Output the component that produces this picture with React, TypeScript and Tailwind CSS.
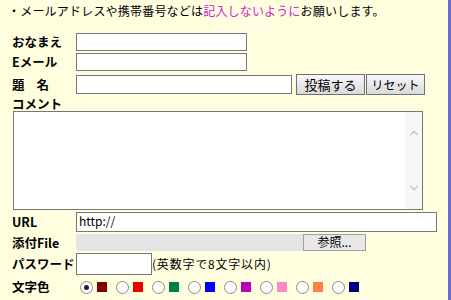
import { ChevronUp, ChevronDown } from "lucide-react"

const swatches = [
  "bg-[#800000]",
  "bg-[#ee0000]",
  "bg-[#008040]",
  "bg-[#0000ff]",
  "bg-[#bb00bb]",
  "bg-[#ff88c0]",
  "bg-[#ff8040]",
  "bg-[#000080]",
]

function Label({ children }: { children: React.ReactNode }) {
  return <div className="w-[64px] shrink-0 text-[12.5px] font-bold leading-[16px]">{children}</div>
}

function Field({ className = "", children }: { className?: string; children?: React.ReactNode }) {
  return (
    <div className={`border border-[#777] bg-white px-[2px] text-[12px] leading-[16px] ${className}`}>
      {children}
    </div>
  )
}

function Radio({ checked }: { checked?: boolean }) {
  return (
    <span className="flex h-[13px] w-[13px] items-center justify-center rounded-full border border-[#8a8a8a] bg-white">
      {checked && <span className="h-[5px] w-[5px] rounded-full bg-[#222]" />}
    </span>
  )
}

export default function App() {
  return (
    <div className="flex h-[300px] w-[451px] bg-[#ffffe0] font-['Noto_Sans_CJK_JP',sans-serif] text-black">
      <div className="flex flex-1 flex-col pl-3">
        <p className="ml-[-4px] h-[32px] pt-[3px] text-[12px] leading-[16px] tracking-[0.2px]">
          ・メールアドレスや携帯番号などは<span className="text-[#cc22cc]">記入しないように</span>お願いします。
        </p>

        <div className="flex h-[20px] items-center">
          <Label>おなまえ</Label>
          <Field className="h-[18px] w-[171px]" />
        </div>
        <div className="flex h-[20px] items-center">
          <Label>Eメール</Label>
          <Field className="h-[18px] w-[171px]" />
        </div>
        <div className="flex h-[25px] items-center">
          <Label>
            <span className="flex gap-[12px]">
              <span>題</span>
              <span>名</span>
            </span>
          </Label>
          <Field className="h-[19px] w-[216px]" />
          <div className="ml-[4px] flex gap-[1px]">
            <button className="h-[21px] w-[69px] border border-[#707070] bg-linear-to-b from-[#f8f8f8] to-[#dadada] text-[13px] leading-[18px]">
              投稿する
            </button>
            <button className="h-[21px] w-[59px] border border-[#707070] bg-linear-to-b from-[#f8f8f8] to-[#dadada] text-[12px] leading-[18px]">
              リセット
            </button>
          </div>
        </div>

        <div className="h-[14px] text-[12.5px] font-bold leading-[14px]">コメント</div>
        <div className="ml-[1px] flex h-[99px] w-[410px] justify-end border border-[#777] bg-white">
          <div className="flex w-[17px] flex-col items-center justify-between bg-[#f7f7f7] py-[14px]">
            <ChevronUp className="h-[14px] w-[14px] text-[#c4c4c4]" strokeWidth={2} />
            <ChevronDown className="h-[14px] w-[14px] text-[#c4c4c4]" strokeWidth={2} />
          </div>
        </div>

        <div className="mt-[1px] flex h-[22px] items-center">
          <Label>URL</Label>
          <Field className="h-[20px] w-[361px]">http://</Field>
        </div>
        <div className="flex h-[19px] items-center">
          <Label>添付File</Label>
          <div className="h-[17px] w-[227px] bg-[#e4e4e4]" />
          <div className="h-[17px] w-[63px] border border-[#a0a0a0] bg-[#e8e8e8] text-center text-[12px] leading-[14px]">
            参照...
          </div>
        </div>
        <div className="flex h-[24px] items-center">
          <Label>パスワード</Label>
          <Field className="h-[22px] w-[76px]" />
          <span className="text-[12px] leading-[16px] tracking-[0.8px]">(英数字で8文字以内)</span>
        </div>
        <div className="flex h-[22px] items-center">
          <Label>文字色</Label>
          <div className="ml-[4px] flex items-center">
            {swatches.map((c, i) => (
              <div key={c} className="mr-[9px] flex items-center gap-[4px]">
                <Radio checked={i === 0} />
                <span className={`h-[10px] w-[10px] ${c}`} />
              </div>
            ))}
          </div>
        </div>
      </div>
      <div className="w-[3px] bg-[#6b6bd6]" />
    </div>
  )
}
